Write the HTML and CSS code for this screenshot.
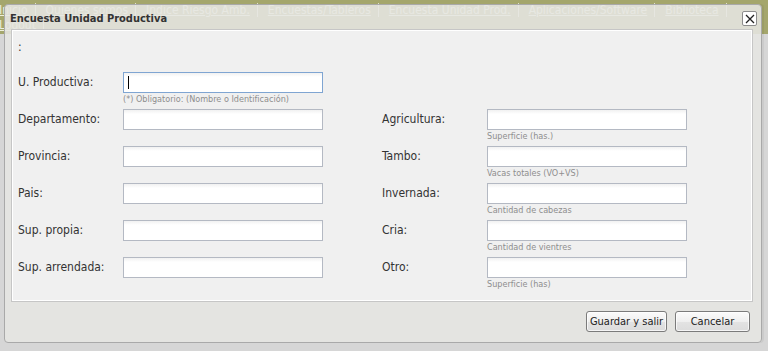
FILE: index.html
```html
<!DOCTYPE html>
<html lang="es">
<head>
  <meta charset="UTF-8">
  <meta name="viewport" content="width=device-width, initial-scale=1.0">
  <title>Encuesta Unidad Productiva</title>
  <link rel="stylesheet" href="styles.css">
</head>
<body>
  <!-- pagina de fondo -->
  <div class="page">
    <nav class="topnav">
      <div class="nav-row">
        <a class="nav-link" href="#">Inicio</a>
        <a class="nav-link" href="#">Quienes somos</a>
        <a class="nav-link" href="#">Indice Riesgo Amb.</a>
        <a class="nav-link" href="#">Encuestas/Tableros</a>
        <a class="nav-link" href="#">Encuesta Unidad Prod.</a>
        <a class="nav-link" href="#">Aplicaciones/Software</a>
        <a class="nav-link" href="#">Biblioteca</a>
      </div>
      <div class="nav-row">
        <a class="nav-link" href="#">Logout</a>
      </div>
    </nav>
  </div>

  <!-- dialogo -->
  <div class="dialog">
    <div class="dialog-titlebar">
      <span class="dialog-title">Encuesta Unidad Productiva</span>
      <button class="dialog-close" type="button">
        <svg width="10" height="10" viewBox="0 0 10 10">
          <path d="M1 1 L9 9 M9 1 L1 9" stroke="#222" stroke-width="1.3" fill="none"/>
        </svg>
      </button>
    </div>

    <div class="dialog-body">
      <div class="form-panel">
        <div class="form-note">:</div>

        <div class="form-grid">
          <label class="field-label">U. Productiva:</label>
          <div class="field">
            <span class="input-box is-focused"><input class="field-input" type="text"></span>
            <div class="field-hint">(*) Obligatorio: (Nombre o Identificación)</div>
          </div>
          <div></div>
          <div></div>

          <label class="field-label">Departamento:</label>
          <div class="field"><span class="input-box"><input class="field-input" type="text"></span></div>
          <label class="field-label">Agricultura:</label>
          <div class="field">
            <span class="input-box"><input class="field-input" type="text"></span>
            <div class="field-hint">Superficie (has.)</div>
          </div>

          <label class="field-label">Provincia:</label>
          <div class="field"><span class="input-box"><input class="field-input" type="text"></span></div>
          <label class="field-label">Tambo:</label>
          <div class="field">
            <span class="input-box"><input class="field-input" type="text"></span>
            <div class="field-hint">Vacas totales (VO+VS)</div>
          </div>

          <label class="field-label">Pais:</label>
          <div class="field"><span class="input-box"><input class="field-input" type="text"></span></div>
          <label class="field-label">Invernada:</label>
          <div class="field">
            <span class="input-box"><input class="field-input" type="text"></span>
            <div class="field-hint">Cantidad de cabezas</div>
          </div>

          <label class="field-label">Sup. propia:</label>
          <div class="field"><span class="input-box"><input class="field-input" type="text"></span></div>
          <label class="field-label">Cria:</label>
          <div class="field">
            <span class="input-box"><input class="field-input" type="text"></span>
            <div class="field-hint">Cantidad de vientres</div>
          </div>

          <label class="field-label">Sup. arrendada:</label>
          <div class="field"><span class="input-box"><input class="field-input" type="text"></span></div>
          <label class="field-label">Otro:</label>
          <div class="field">
            <span class="input-box"><input class="field-input" type="text"></span>
            <div class="field-hint">Superficie (has)</div>
          </div>
        </div>
      </div>
    </div>

    <div class="dialog-footer">
      <button class="btn btn-save" type="button">Guardar y salir</button>
      <button class="btn btn-cancel" type="button">Cancelar</button>
    </div>
  </div>
</body>
</html>
```

FILE: styles.css
```css
body {
  margin: 0;
  overflow: hidden;
  background-color: #d6d6d6;
  font-family: "DejaVu Sans Condensed", "DejaVu Sans", sans-serif;
}

.page {
  height: 351px;
}

/* barra de navegacion */
.topnav {
  background-color: #a4a66c;
  height: 34px;
  padding-top: 3px;
  box-sizing: border-box;
}
.nav-row {
  display: flex;
  height: 14px;
  margin-bottom: 1px;
  margin-left: -1px;
}
.nav-link {
  color: #eef0dc;
  font-size: 12px;
  line-height: 14px;
  padding: 0 7px 0 10px;
  border-right: 1px solid #e0e2cf;
}
.nav-row .nav-link:first-child {
  padding-left: 0;
}

/* dialogo */
.dialog {
  position: absolute;
  top: 4px;
  left: 4px;
  width: 758px;
  height: 339px;
  box-sizing: border-box;
  border: 1px solid #a9a9a9;
  border-radius: 4px;
  background-color: rgba(230, 230, 226, 0.88);
  box-shadow: 2px 0 0 rgba(0, 0, 0, 0.05);
  display: flex;
  flex-direction: column;
}

.dialog-titlebar {
  height: 24px;
  display: flex;
  align-items: center;
  justify-content: space-between;
  padding: 0 4px 0 5px;
}
.dialog-title {
  font-size: 11px;
  font-weight: bold;
  color: #333;
  padding-top: 2px;
}
.dialog-close {
  width: 15px;
  height: 15px;
  padding: 0;
  display: flex;
  align-items: center;
  justify-content: center;
  background: #fff;
  border: 1px solid #8d8d8d;
  border-radius: 2px;
  margin-top: 3px;
}

.dialog-body {
  padding: 0 8px 0 6px;
}

.form-panel {
  height: 273px;
  box-sizing: border-box;
  background-color: #f0f0f0;
  border: 1px solid #c6c6c6;
  box-shadow: inset -1px -1px 0 #fff, inset 1px 1px 0 #fff;
  padding: 10px 6px 0 6px;
}

.form-note {
  font-size: 12px;
  line-height: 14px;
  color: #333;
  height: 14px;
}

.form-grid {
  margin-top: 18px;
  display: grid;
  grid-template-columns: 105px 259px 105px 200px;
  grid-auto-rows: 37px;
}

.field-label {
  font-size: 12px;
  line-height: 21px;
  color: #333;
}

.input-box {
  display: block;
  position: relative;
  width: 200px;
  height: 21px;
}
.field-input {
  display: block;
  width: 200px;
  height: 21px;
  box-sizing: border-box;
  margin: 0;
  border: 1px solid #b4b9c3;
  background: linear-gradient(#f1f1f1, #fff 4px);
  outline: none;
}
.input-box.is-focused .field-input {
  border-color: #7fa5d2;
}
/* cursor de texto */
.input-box.is-focused::after {
  content: "";
  position: absolute;
  left: 5px;
  top: 4px;
  width: 1px;
  height: 13px;
  background-color: #000;
}

.field-hint {
  font-size: 9px;
  line-height: 11px;
  color: #8e8e8e;
  padding-top: 1px;
}

.dialog-footer {
  flex: 1;
  display: flex;
  justify-content: flex-end;
  align-items: flex-start;
  gap: 8px;
  padding: 9px 11px 0 0;
}

.btn {
  height: 21px;
  padding: 0;
  white-space: nowrap;
  font-family: "DejaVu Sans Condensed", "DejaVu Sans", sans-serif;
  font-size: 11px;
  color: #222;
  border: 1px solid #7b7b7b;
  border-radius: 3px;
  background: linear-gradient(#fbfbfb, #efefef 50%, #e3e3e3 51%, #dcdcdc);
  box-shadow: inset 0 0 0 1px rgba(255, 255, 255, 0.7);
}
.btn-save {
  width: 81px;
}
.btn-cancel {
  width: 75px;
}
```
